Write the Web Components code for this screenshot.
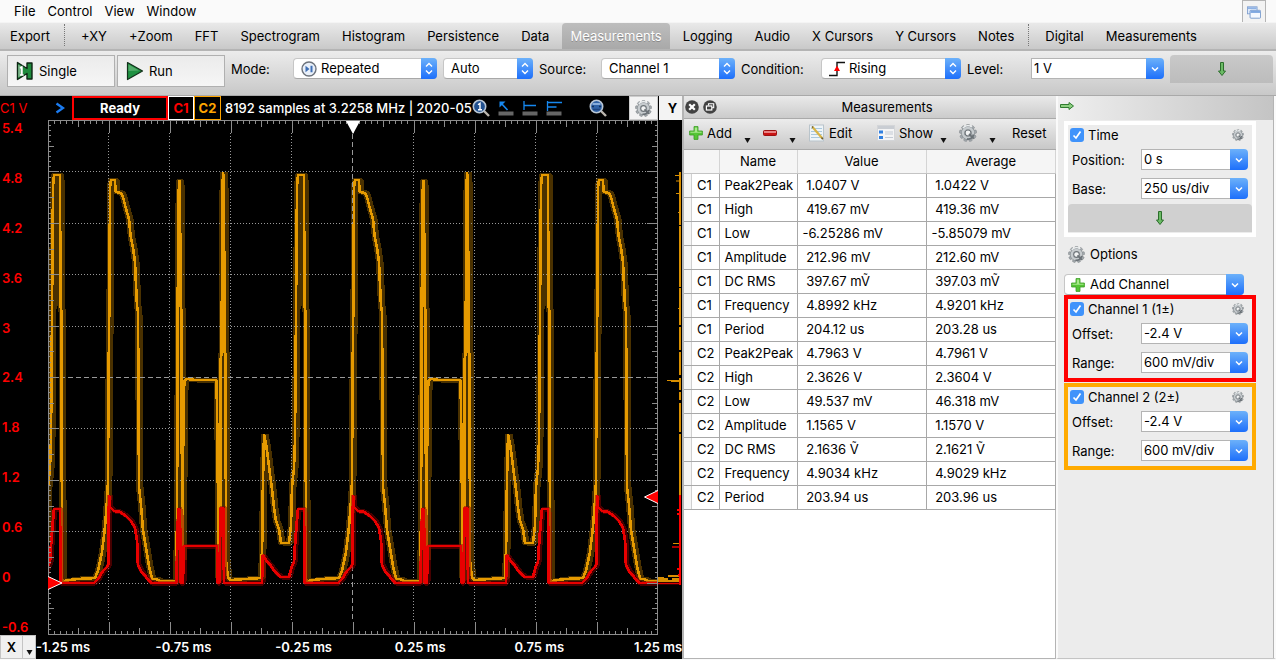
<!DOCTYPE html>
<html lang="en">
<head>
<meta charset="utf-8">
<title>Oscilloscope</title>
<style>
html, body { margin: 0; height: 100%; }
body { font: 13px/16px Inter, "Liberation Sans", sans-serif; color: #000; background: #fafafa; }
</style>
</head>
<body>
<scope-app></scope-app>
<script>
const RESET = `
  *, *::before, *::after { box-sizing: border-box; }
  button, input, select { font: inherit; color: inherit; margin: 0; padding: 0; border: 0; background: none; border-radius: 0; text-align: left; }
  button { white-space: nowrap; }
`;
class Base extends HTMLElement {
  connectedCallback() {
    if (this.shadowRoot) return;
    const root = this.attachShadow({ mode: "open" });
    const t = document.createElement("template");
    t.innerHTML = `<style>${RESET}${this.styles()}</style>${this.markup()}`;
    root.append(t.content.cloneNode(true));
  }
  styles() { return ""; }
  markup() { return ""; }
}

/* ---------- icons ---------- */
const teeth = n => Array.from({ length: n }, (_, i) => `<rect x="-1.6" y="-8.6" width="3.2" height="4" rx=".8" transform="rotate(${i * 360 / n})"/>`).join("");
const ICONS = {
  gear: `<svg viewBox="-9 -9 18 18"><g fill="#a3a9ad" stroke="#7d8387" stroke-width=".5">${teeth(9)}</g><circle r="5.2" fill="none" stroke="#8d9397" stroke-width="3.4"/><circle r="5" fill="none" stroke="#c6cbce" stroke-width="2.4"/><path d="M-5-5A7 7 0 0 1 4-6" fill="none" stroke="#eceff0" stroke-width="1.500"/><circle r="3" fill="#f2f3f3" stroke="#6b7277" stroke-width="1.200"/><path d="M1 1 5.800 5.600M5.500 1.500A5.500 5.500 0 0 1-1 6" fill="none" stroke="#6b7277" stroke-width="1.800"/></svg>`,
  single: `<svg viewBox="0 0 18 20"><path d="M1.5 1.5 11 7.5V2h5v16h-5v-5.500L1.5 18.500z" fill="#1f8a3c" stroke="#0d2413" stroke-width="1.400" stroke-linejoin="round"/><path d="M2.200 3.500 7 6.500v7L2.200 16.500z" fill="#7fb58c"/><path d="M4 7.200 5.800 6v8M4 14h3.600" fill="none" stroke="#fff" stroke-width="1.500"/></svg>`,
  run: `<svg viewBox="0 0 18 20"><path d="M1.500 1.500 16.500 10 1.500 18.500z" fill="#1f9142" stroke="#12301a" stroke-width="1.200" stroke-linejoin="round"/><path d="M2.500 3.500 13 9.500 2.500 10z" fill="#55ad6c"/></svg>`,
  repeat: `<svg viewBox="0 0 16 16"><circle cx="8" cy="8" r="7" fill="#e9f0fa" stroke="#6d737c" stroke-width="1.400"/><path d="M4.500 4.800v6.400L8.500 8zM9.500 4.800h2v6.400h-2L9.500 8z" fill="#3f6fb5"/></svg>`,
  rising: `<svg viewBox="0 0 16 16"><path d="M0 14.500H8V1.500h8" fill="none" stroke="#111" stroke-width="1.400"/><path d="M8 4.500 11 10H5z" fill="#f00"/></svg>`,
  down: `<svg viewBox="0 0 8 14"><path d="M2.500.5h3v8.500h2L4 13.500.5 9h2z" fill="#6cbb66" stroke="#2c6e2c" stroke-width="1"/></svg>`,
  right: `<svg viewBox="0 0 14 8"><path d="M.5 2.500H9v-2L13.500 4 9 7.500v-2H.5z" fill="#8ccf80" stroke="#2f7a2f" stroke-width="1"/></svg>`,
  plus: `<svg viewBox="0 0 14 14"><path d="M5 .6h4V5h4.400v4H9v4.400H5V9H.6V5H5z" fill="#55c535" stroke="#3b9a24" stroke-width=".8"/><path d="M5.800 1.400h2.400v4.400h4.400v1H1.400v-1h4.400z" fill="#a8e88c"/></svg>`,
  minus: `<svg viewBox="0 0 14 6"><rect x=".5" y=".5" width="13" height="5" rx="1" fill="#c91414" stroke="#9c1212"/><path d="M1 1h12v2H1z" fill="#e98484"/></svg>`,
  edit: `<svg viewBox="0 0 16 18"><rect x=".5" y="1" width="14" height="16" fill="#eef4f8" stroke="#b9c4cb"/><path d="M2 4.500h11M2 7.500h11M2 10.500h11M2 13.500h11" stroke="#a9c8dd"/><path d="M3.500 3 13 14" stroke="#d8b445" stroke-width="2.200"/><path d="M3 2.400 4 3.600M12.600 13.600l1.200 1.600" stroke="#6b5a2c" stroke-width="1.600"/></svg>`,
  show: `<svg viewBox="0 0 18 18"><rect x=".5" y="1.500" width="17" height="15" fill="#f4f4f5" stroke="#d3d5d8"/><path d="M1 2h16v3H1z" fill="#c9cdd3"/><path d="M2 6.500h4v3H2zM2 12h4v3H2z" fill="#2f7fe0"/><path d="M8 8h8M8 10h8M8 13.500h8" stroke="#c3cad4"/></svg>`,
  zoom1: `<svg viewBox="0 0 18 18"><path d="M12 12 17 17" stroke="#bbb6ae" stroke-width="2.400"/><circle cx="7.500" cy="7.500" r="6.200" fill="#21508f" stroke="#b9c6d4" stroke-width="1.600"/><path d="M6 5.800 8 4.400v6.400M6 10.800h4" fill="none" stroke="#fff" stroke-width="1.400"/></svg>`,
  zoomfit: `<svg viewBox="0 0 18 18"><path d="M12 12 17 17" stroke="#bbb6ae" stroke-width="2.400"/><circle cx="7.500" cy="7.500" r="6.200" fill="#2f62a6" stroke="#b9c6d4" stroke-width="1.600"/><path d="M3.500 5h8" stroke="#86abd8" stroke-width="2"/><path d="M3 7.500h2M10 7.500h2" stroke="#10305c" stroke-width="1.500"/><path d="M4 10.500h7" stroke="#1c4480" stroke-width="1.500"/></svg>`,
  cursor: `<svg viewBox="0 0 16 16"><path d="M.5 11.500h15v4H.5z" fill="#666"/><path d="M2.500 2.500 9.500 10" fill="none" stroke="#1688f0" stroke-width="1.600"/><path d="M1.500 1.500h6l-2 2-2 2-2 2z" fill="#1688f0"/></svg>`,
  hcursor: `<svg viewBox="0 0 16 16"><path d="M.5 11.500h15v4H.5z" fill="#666"/><path d="M2 1v9M2 5.500h12" fill="none" stroke="#1688f0" stroke-width="1.300"/></svg>`,
  vcursor: `<svg viewBox="0 0 16 16"><path d="M.5 11.500h15v4H.5z" fill="#666"/><path d="M1.500 1v10M1.500 2.500H16M1.500 7h9" fill="none" stroke="#1688f0" stroke-width="1.300"/></svg>`,
  chevron: `<svg viewBox="0 0 10 12"><path d="M1.500 1.500 8 6 1.500 10.500" fill="none" stroke="#1b7cf2" stroke-width="2.400"/></svg>`,
  windows: `<svg viewBox="0 0 16 14"><rect x=".5" y=".5" width="11" height="8" fill="#dfeafa" stroke="#7f9fcf"/><path d="M1 1h10v2H1z" fill="#8fb2e4"/><rect x="3.500" y="4.500" width="12" height="9" rx="1" fill="#f4f8ff" stroke="#6f93c8"/><path d="M4 5h11v2.500H4z" fill="#7ea7e0"/></svg>`,
  close: `<svg viewBox="0 0 14 14"><circle cx="7" cy="7" r="6.800" fill="#424242"/><path d="M4.200 4.200l5.600 5.600M9.800 4.200 4.200 9.800" stroke="#fff" stroke-width="2.200"/></svg>`,
  float: `<svg viewBox="0 0 14 14"><circle cx="7" cy="7" r="6.800" fill="#424242"/><path d="M5.500 5.500V3.800h5.200v4H9" fill="none" stroke="#fff" stroke-width="1.100"/><rect x="3.400" y="6" width="5.400" height="4" fill="none" stroke="#fff" stroke-width="1.200"/></svg>`,
  menu: `<svg viewBox="0 0 6 5"><path d="M0 0h6L3 5z" fill="#111"/></svg>`,
  updown: `<svg viewBox="0 0 16 21"><path d="M5 8.500 8 5.500l3 3M5 12.500l3 3 3-3" fill="none" stroke="#fff" stroke-width="1.400"/></svg>`,
  dropdown: `<svg viewBox="0 0 18 21"><path d="M6 9.500 9 12.500l3-3" fill="none" stroke="#fff" stroke-width="1.500"/></svg>`
};
customElements.define("scope-icon", class extends Base {
  styles() {
    return `:host { display: block; flex: none; width: ${this.getAttribute("w")}px; height: ${this.getAttribute("h")}px; }
      svg { display: block; width: 100%; height: 100%; }`;
  }
  markup() { return ICONS[this.getAttribute("name")]; }
});
const icon = (name, w, h = w) => `<scope-icon name="${name}" w="${w}" h="${h}" aria-hidden="true"></scope-icon>`;

/* ---------- labelled field: a pop-up list or an editable combo ---------- */
customElements.define("scope-field", class extends Base {
  styles() { return `
    :host { display: flex; height: 21px; align-items: center; }
    label { flex: none; width: var(--label, 62px); }
    .box { flex: 1; min-width: 0; height: 21px; display: grid; }
    .box > * { grid-area: 1 / 1; }
    select { appearance: none; width: 100%; height: 21px; padding: 0 20px 2px 7px; line-height: 18px; background: #fff; border: 1px solid #c6c6c6; border-bottom-color: #a8a8a8; border-radius: 4px; }
    .icon select { padding-left: var(--inset, 27px); }
    .pic { justify-self: start; align-self: center; padding-left: var(--pic, 8px); pointer-events: none; }
    .cap { justify-self: end; height: 21px; border-radius: 0 4px 4px 0; background: linear-gradient(#6cb1fa, #1d6ffb); pointer-events: none; }
    .edit { display: flex; }
    input { flex: 1; width: 0; min-width: 0; height: 21px; padding: 0 2px 2px; background: #fff; border: 1px solid #b4b4b4; border-right: 0; }
    .cap.open { flex: none; pointer-events: auto; }
  `; }
  markup() {
    const label = this.getAttribute("label"), value = this.getAttribute("value"), pic = this.getAttribute("icon");
    const head = this.hasAttribute("bare") ? "" : `<label for="f">${label}:</label>`;
    const aria = head ? "" : ` aria-label="${label}"`;
    if (this.hasAttribute("editable"))
      return `${head}<div class="box edit"><input id="f" value="${value}"${aria}><button class="cap open" aria-label="Choose ${label}">${icon("dropdown", 18, 21)}</button></div>`;
    return `${head}<div class="box ${pic ? "icon" : ""}"><select id="f"${aria}><option>${value}</option></select>
      ${pic ? `<span class="pic">${pic === "plus" ? icon(pic, 14) : icon(pic, 16)}</span>` : ""}<span class="cap">${this.hasAttribute("single") ? icon("dropdown", 18, 21) : icon("updown", 16, 21)}</span></div>`;
  }
});

/* ---------- menu bar ---------- */
customElements.define("scope-menubar", class extends Base {
  styles() { return `
    :host { display: flex; align-items: center; height: 22px; padding: 0 10px 1px 8px; background: #fafafa; }
    nav { display: flex; flex: 1; }
    nav button { padding: 0 6px; }
    .win { align-self: flex-start; width: 24px; height: 22px; padding: 5px 4px; border: 1px solid #b5b5b5; border-bottom: 0; background: #f3f3f3; }
  `; }
  markup() { return `<nav>${["File", "Control", "View", "Window"].map(t => `<button>${t}</button>`).join("")}</nav>
    <button class="win" aria-label="Windows">${icon("windows", 14, 13)}</button>`; }
});

/* ---------- view bar ---------- */
customElements.define("scope-viewbar", class extends Base {
  styles() { return `
    :host { display: flex; align-items: stretch; height: 29px; padding-left: 1px; background: linear-gradient(#e9e9e9, #c9c9c9); border-bottom: 2px solid #b4b4b4; border-top: 1px solid #f4f4f4; }
    button { padding: 0 9px; margin-right: 4px; border-radius: 4px 4px 0 0; }
    .on { padding: 0 8px; color: #fff; background: linear-gradient(#bdbdbd, #a9a9a9); text-shadow: 0 1px 0 #8a8a8a; }
    i { width: 1px; margin: 1px 7px 3px 1px; border-left: 1px dotted #777; }
  `; }
  markup() {
    return ["Export", "|", "+XY", "+Zoom", "FFT", "Spectrogram", "Histogram", "Persistence", "Data", "*Measurements", "Logging", "Audio", "X Cursors", "Y Cursors", "Notes", "|", "Digital", "Measurements"]
      .map(t => t === "|" ? "<i></i>" : t[0] === "*" ? `<button class="on" aria-pressed="true">${t.slice(1)}</button>` : `<button>${t}</button>`).join("");
  }
});

/* ---------- acquisition controls ---------- */
customElements.define("scope-controls", class extends Base {
  styles() { return `
    :host { display: flex; gap: 6px; height: 45px; padding: 4px 3px 0 7px; background: linear-gradient(#ececec, #c8c8c8); border-bottom: 1px solid #a9a9a9; }
    .run { display: flex; gap: 2px; }
    .run button { display: flex; align-items: center; gap: 5px; width: 108px; height: 32px; padding-left: 8px; background: linear-gradient(#ebebeb, #f6f6f6); border: 1px solid #b0b0b0; }
    scope-field { margin-top: 3px; flex: none; }
    .more { flex: 1; height: 28px; display: flex; justify-content: center; align-items: center; background: linear-gradient(#c9c9c9, #bcbcbc); border-radius: 4px 4px 0 0; }
  `; }
  markup() { return `<div class="run"><button>${icon("single", 18, 20)}Single</button><button>${icon("run", 18, 20)}Run</button></div>
    <scope-field style="width:206px" label="Mode" value="Repeated" icon="repeat"></scope-field>
    <scope-field style="width:90px" label="Trigger mode" value="Auto" bare></scope-field>
    <scope-field style="width:196px" label="Source" value="Channel 1"></scope-field>
    <scope-field style="width:220px;--label:80px" label="Condition" value="Rising" icon="rising"></scope-field>
    <scope-field style="width:197px;--label:64px" label="Level" value="1 V" editable></scope-field>
    <button class="more" aria-label="More settings">${icon("down", 8, 14)}</button>`; }
});

/* ---------- plot ---------- */
const ORANGE = [[62,580],[64,581],[70,580],[78,579],[95,578],[98,571],[102,552],[105,527],[107,500],[108,482],[108.5,380],[109.5,292],[110,187],[111,180],[115,180],[115.5,192],[121,193],[123,197],[125,205],[127,212],[129,219],[130,230],[131,238],[133,248],[135,262],[136,285],[137,306],[138,312],[138.5,400],[139,487],[141,505],[143,530],[146,548],[149,566],[152,579],[156,579],[160,581],[176,581],[177,520],[177.500,400],[178,226],[179,181],[180,181],[180.500,306],[181.500,310],[182,540],[182.500,560],[183.500,400],[184.500,380],[188,379],[195,380],[216.500,380],[217.500,440],[218.500,578],[220,578],[220.800,358],[221.500,355],[222.500,190],[223,172],[224,182],[224.500,352],[225.500,354],[226,560],[228,578],[231,580],[245,579],[261,578],[262.300,540],[262.600,500],[264,434],[266,444],[268,458],[270,474],[272,489],[274,508],[276,521],[279,529],[281,543],[289,543],[291,525],[292,487],[294,468],[295,440],[296,312],[297,187],[298,175],[304,175],[304.500,306],[305.500,312],[305.700,470],[306,500],[306,580]];
const RED = [[62,583],[94,583],[98,579],[103,571],[107,567],[108.500,564],[109,495],[110,507],[114,511],[120,512],[126,516],[131,521],[135,528],[137,540],[138,565],[141,571],[146,577],[151,583],[176.500,583],[177.500,530],[178.500,508],[180,512],[180.500,583],[183,583],[183.500,546],[190,546],[217,546],[217.500,583],[219.500,583],[220.500,508],[223.500,508],[224,583],[262,583],[262.500,555],[266,560],[271,566],[276,573],[281,577],[289,577],[292,566],[294,562],[295,545],[297,520],[298,509],[304,509],[304.500,583],[306,583]];
const trace = pts => "M" + [-244, 0, 244, 488].flatMap(d => pts.map(([x, y]) => `${x + d} ${y}`)).join("L");
const plotSvg = () => {
  let ticks = "", grid = "", axis = "";
  for (let i = 0; i <= 100; i++) {
    const x = Math.round(47.5 + i * 6.1) + .5, n = i % 10 === 0 ? 12 : i % 5 === 0 ? 6 : 3;
    if (x > 48 && x < 658) ticks += `M${x} 121v${n}M${x} 634v${-n}`;
    const y = Math.round(120 + i * 5.14) + .5, m = i % 10 === 0 ? 10 : i % 5 === 0 ? 5 : 2;
    if (y < 634) ticks += `M49 ${y}h${m}M657 ${y}h${-m}`;
  }
  for (let i = 1; i < 10; i++) {
    const x = 47.5 + i * 61, y = Math.round(120 + i * 51.4) + .5;
    if (i === 5) axis += `M352.500 134V622M60 377.500H646`;
    else grid += `M${x} 133V622M60 ${y}H646`;
  }
  const o = trace(ORANGE), r = trace(RED);
  return `<svg viewBox="48 120 634 515" preserveAspectRatio="none" role="img" aria-label="Waveforms of channel 1 and channel 2">
    <clipPath id="c"><path d="M48 120H657.500V636H48z"/></clipPath>
    <g fill="none" clip-path="url(#c)" stroke-linejoin="bevel" shape-rendering="crispEdges">
      <path d="${o}" stroke="#4a3100" stroke-width="4" transform="translate(-1 0)"/><path d="${o}" stroke="#4a3100" stroke-width="5" transform="translate(2 0)"/>
      <path d="${grid}" stroke="#999" stroke-dasharray="1 2"/>
      <path d="${axis}" stroke="#999" stroke-dasharray="5 3"/>
      <path d="${o}" stroke="#e69a00" stroke-width="2.600"/>
      <path d="${r}" stroke="#8c0000" stroke-opacity=".5" stroke-width="5" transform="translate(1 0)"/>
      <path d="${r}" stroke="#e80000" stroke-width="2.800"/>
    </g>
    <path d="M48.500 634.500V120.500H657.500V634.500z${ticks}" fill="none" stroke="#8c8c8c" shape-rendering="crispEdges"/>
    <g fill="none" stroke-width="2">
      <path d="M680 172V225M680 226V287M680 288V325M680 327V350M680 352V375M680 378V390M680 392V400M680 403V432M680 434V495" stroke="#d98f00"/>
      <path d="M675 175.500h5M676 181h4M676 193.500h4M678 212.500h2M678 308.500h2M667 380.500h13M671 381.500h9M673 543.500h7" stroke="#d98f00" stroke-width="1"/>
      <path d="M658 579H668M658 581H680M672 579H680M668 576H680M658 578H664" stroke="#d98f00"/>
      <path d="M680 495V585M677 510h3M677 514h3M677 569h3M678 575h2" stroke="#f00"/>
      <path d="M672 547h8M658 583.500h22" stroke="#e00000" stroke-width="1.500"/>
    </g>
    <path d="M346 121H360L353 134z" fill="#fff"/>
    <path d="M48 576.500 62 583 48 589.500" fill="#f00" stroke="#fff"/>
    <path d="M658 490.500 644.500 497 658 503.500" fill="#f00" stroke="#fff"/>
  </svg>`;
};
customElements.define("scope-plot", class extends Base {
  styles() { return `
    :host { display: grid; grid-template-rows: 24px minmax(0, 1fr) 24px; min-width: 0; min-height: 0; background: #000; color: #fff; font-weight: 600; overflow: hidden; }
    header { display: flex; align-items: center; min-width: 0; white-space: nowrap; }
    .unit { width: 55px; color: #f00; font-weight: 400; }
    .state { width: 96px; height: 24px; margin-left: 7px; border: 2px solid #f00; text-align: center; line-height: 20px; font-weight: 700; }
    .ch { width: 26px; height: 24px; text-align: center; border: 1px solid #fff; color: #f00; font-weight: 700; }
    .ch.two { width: 27px; border-color: #ffa500; color: #ffa500; }
    .info { flex: none; width: 247px; margin-left: 4px; font-weight: 500; }
    .tools { display: flex; flex: 1; align-items: center; }
    .tools button { margin-right: 8px; }
    .tools .wide { margin-left: 19px; }
    .gear, .y { height: 24px; background: #f3f3f3; color: #000; display: flex; align-items: center; justify-content: center; }
    .gear { width: 29px; margin-right: 1px; border: 1px solid #ccc; }
    .y { width: 23px; font-weight: 700; padding-left: 4px; }
    main { display: grid; grid-template-columns: 48px minmax(0, 1fr); min-height: 0; }
    .scale { display: flex; flex-direction: column; justify-content: space-between; padding-left: 2px; color: #f00; }
    svg { display: block; width: 100%; height: 100%; }
    footer { display: grid; grid-template-columns: 23px 13px repeat(5, minmax(0, 1fr)) 48px; line-height: 24px; white-space: nowrap; }
    footer button { height: 24px; background: #f0f0f0; color: #000; border: 1px solid #c4c4c4; display: flex; justify-content: center; align-items: center; }
    footer button + button { align-items: flex-end; padding-bottom: 3px; border-left: 0; }
  `; }
  markup() { return `<header><span class="unit">C1 V</span>${icon("chevron", 10, 12)}<span class="state">Ready</span>
    <button class="ch">C1</button><button class="ch two">C2</button><span class="info">8192 samples at 3.2258 MHz | 2020-05</span>
    <div class="tools"><button aria-label="Zoom 1">${icon("zoom1", 18)}</button><button aria-label="Free cursor">${icon("cursor", 16)}</button><button aria-label="Horizontal cursor">${icon("hcursor", 16)}</button><button aria-label="Vertical cursor">${icon("vcursor", 16)}</button><button class="wide" aria-label="Zoom to fit">${icon("zoomfit", 18)}</button></div>
    <button class="gear" aria-label="Plot options">${icon("gear", 17)}</button><button class="y">Y</button></header>
    <main><div class="scale">${["5.4", "4.8", "4.2", "3.6", "3", "2.4", "1.8", "1.2", "0.6", "0", "-0.6"].map(t => `<span>${t}</span>`).join("")}</div>${plotSvg()}</main>
    <footer><button>X</button><button aria-label="X menu">${icon("menu", 7, 5)}</button>${["-1.25", "-0.75", "-0.25", "0.25", "0.75", "1.25"].map(t => `<span>${t} ms</span>`).join("")}</footer>`; }
});

/* ---------- measurements ---------- */
const ROWS = [
  ["C1", "Peak2Peak", " 1.0407 V", " 1.0422 V"], ["C1", "High", " 419.67 mV", " 419.36 mV"], ["C1", "Low", "-6.25286 mV", "-5.85079 mV"],
  ["C1", "Amplitude", " 212.96 mV", " 212.60 mV"], ["C1", "DC RMS", " 397.67 mṼ", " 397.03 mṼ"], ["C1", "Frequency", " 4.8992 kHz", " 4.9201 kHz"],
  ["C1", "Period", " 204.12 us", " 203.28 us"], ["C2", "Peak2Peak", " 4.7963 V", " 4.7961 V"], ["C2", "High", " 2.3626 V", " 2.3604 V"],
  ["C2", "Low", " 49.537 mV", " 46.318 mV"], ["C2", "Amplitude", " 1.1565 V", " 1.1570 V"], ["C2", "DC RMS", " 2.1636 Ṽ", " 2.1621 Ṽ"],
  ["C2", "Frequency", " 4.9034 kHz", " 4.9029 kHz"], ["C2", "Period", " 203.94 us", " 203.96 us"]];
customElements.define("scope-measurements", class extends Base {
  styles() { return `
    :host { display: flex; flex-direction: column; background: #fff; border-left: 2px solid #b4b4b4; border-bottom: 1px solid #b4b4b4; min-height: 0; overflow: hidden; box-shadow: inset -1px 0 #b4b4b4; }
    header { flex: none; display: grid; grid-template-columns: 34px 1fr; align-items: center; height: 23px; background: linear-gradient(#eaeaea, #cbcbcb); border-bottom: 1px solid #aaa; }
    header div { display: flex; gap: 4px; padding-left: 1px; }
    h2 { margin: 0; font: inherit; text-align: center; }
    .bar { flex: none; display: grid; grid-template-columns: 55px 19px 26px 20px 68px 63px 19px 30px 23px 1fr; align-items: center; height: 31px; padding: 0 0 2px 5px; background: linear-gradient(#ececec, #c8c8c8); border-bottom: 1px solid #aaa; }
    .bar button { display: flex; align-items: center; gap: 4px; }
    .bar button.m { padding-top: 14px; }
    table { width: 100%; border-collapse: collapse; table-layout: fixed; }
    th { font-weight: 400; height: 23px; padding: 0; background: #f5f5f5; border-right: 1px solid #d4d4d4; border-bottom: 1px solid #c4c4c4; }
    td { height: 24px; padding: 0 0 0 5px; white-space: pre; border-right: 1px solid #a8a8a8; border-bottom: 1px solid #a8a8a8; }
    td:first-child { padding: 0 0 0 13px; background: linear-gradient(90deg, #f5f5f5 7px, #d0d0d0 7px, #d0d0d0 8px, #fff 8px); }
    .a { width: 35px; } .b { width: 78px; } .c { width: 129px; }
  `; }
  markup() {
    const m = l => `<button class="m" aria-label="${l}">${icon("menu", 7, 5)}</button>`;
    return `<header><div><button aria-label="Close">${icon("close", 14)}</button><button aria-label="Detach">${icon("float", 14)}</button></div><h2>Measurements</h2></header>
    <div class="bar"><button>${icon("plus", 14)}Add</button>${m("Add menu")}<button aria-label="Remove">${icon("minus", 14, 6)}</button>${m("Remove menu")}
      <button>${icon("edit", 16, 18)}Edit</button><button>${icon("show", 18)}Show</button>${m("Show menu")}<button aria-label="Options">${icon("gear", 18)}</button>${m("Options menu")}<button>Reset</button></div>
    <table><colgroup><col class="a"><col class="b"><col class="c"><col></colgroup><thead><tr><th></th><th>Name</th><th>Value</th><th>Average</th></tr></thead>
    <tbody>${ROWS.map(r => `<tr>${r.map(c => `<td>${c}</td>`).join("")}</tr>`).join("")}</tbody></table>`;
  }
});

/* ---------- side panel ---------- */
customElements.define("scope-group", class extends Base {
  styles() { return `
    :host { display: block; border: 4px solid var(--edge, #fff); padding-bottom: 5px; }
    .head { display: flex; align-items: center; height: 24px; padding: 0 8px 4px 2px; }
    label { display: flex; align-items: center; gap: 4px; flex: 1; }
    input { appearance: none; width: 14px; height: 14px; border-radius: 3px; background: #3f93fb url("data:image/svg+xml,%3Csvg xmlns='http://www.w3.org/2000/svg' viewBox='0 0 14 14'%3E%3Cpath d='M3.500 7.500 6 10 10.500 3.500' fill='none' stroke='white' stroke-width='1.700'/%3E%3C/svg%3E"); }
    .body { display: grid; gap: 8px; padding: 0 4px; --label: 69px; }
    ::slotted(scope-field) { min-width: 0; }
  `; }
  markup() { return `<div class="head"><label><input type="checkbox" checked>${this.getAttribute("name")}</label><button aria-label="${this.getAttribute("name")} options">${icon("gear", 12)}</button></div>
    <div class="body"><slot></slot></div><slot name="more"></slot>`; }
});
customElements.define("scope-side", class extends Base {
  styles() { return `
    :host { display: block; background: #ececec; border-left: 2px solid #fafafa; border-right: 2px solid #fafafa; border-bottom: 1px solid #c4c4c4; box-shadow: inset -1px 0 #b4b4b4; overflow: hidden; min-height: 0; }
    .top { display: flex; align-items: center; height: 24px; padding: 0 0 4px 2px; background: linear-gradient(90deg, #efefef, #c4c4c4); margin-right: 1px; }
    .list { padding: 1px 18px 0 6px; }
    scope-group + scope-group { margin-top: 1px; }
    .time { padding-bottom: 1px; }
    .more { display: flex; justify-content: center; align-items: center; width: 100%; height: 28px; margin-top: 5px; background: #d0d0d0; border-radius: 4px 4px 0 0; }
    .opt { display: flex; align-items: center; gap: 5px; height: 37px; padding: 0 0 3px 4px; }
    .add { width: 180px; height: 21px; --inset: 25px; --pic: 7px; }
  `; }
  markup() { return `<div class="top"><button aria-label="Collapse">${icon("right", 14, 8)}</button></div>
    <div class="list">
      <scope-group class="time" name="Time"><scope-field label="Position" value="0 s" editable></scope-field><scope-field label="Base" value="250 us/div" editable></scope-field>
        <button slot="more" class="more" aria-label="More time settings">${icon("down", 8, 14)}</button></scope-group>
      <button class="opt">${icon("gear", 17)}Options</button>
      <scope-field class="add" label="Channel" value="Add Channel" icon="plus" bare single></scope-field>
      <scope-group style="--edge:#f00" name="Channel 1 (1±)"><scope-field label="Offset" value="-2.4 V" editable></scope-field><scope-field label="Range" value="600 mV/div" editable></scope-field></scope-group>
      <scope-group style="--edge:#ffaa00" name="Channel 2 (2±)"><scope-field label="Offset" value="-2.4 V" editable></scope-field><scope-field label="Range" value="600 mV/div" editable></scope-field></scope-group>
    </div>`; }
});

customElements.define("scope-app", class extends Base {
  styles() { return `
    :host { display: flex; flex-direction: column; height: 100vh; padding-bottom: 1px; box-sizing: border-box; }
    :host > * { flex: none; }
    .work { flex: 1; min-height: 0; display: grid; grid-template-columns: minmax(0, 1fr) 374px 220px; grid-template-rows: minmax(0, 1fr); }
  `; }
  markup() { return `<scope-menubar></scope-menubar><scope-viewbar></scope-viewbar><scope-controls></scope-controls>
    <div class="work"><scope-plot></scope-plot><scope-measurements></scope-measurements><scope-side></scope-side></div>`; }
});
</script>
</body>
</html>
